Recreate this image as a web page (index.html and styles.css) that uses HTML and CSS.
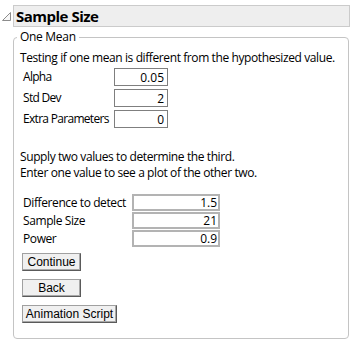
FILE: index.html
```html
<!DOCTYPE html>
<html lang="en">
<head>
    <meta charset="UTF-8">
    <meta name="viewport" content="width=device-width, initial-scale=1.0">
    <title>Sample Size</title>
    <link rel="stylesheet" href="styles.css">
</head>
<body>
    <div class="outline-head">
        <svg class="disclosure" width="9" height="9" viewBox="0 0 9 9">
            <path d="M8.5 0.5 L8.5 8.5 L0.5 8.5 Z" fill="#f7f7f7" stroke="#8c8c8c" stroke-width="1"/>
        </svg>
        <div class="outline-title">Sample Size</div>
    </div>

    <fieldset class="group">
        <legend>One Mean</legend>
        <p class="note">Testing if one mean is different from the hypothesized value.</p>

        <div class="params">
            <label for="alpha">Alpha</label>
            <input id="alpha" class="num" type="text" value="0.05">
            <label for="stddev">Std Dev</label>
            <input id="stddev" class="num" type="text" value="2">
            <label for="extra">Extra Parameters</label>
            <input id="extra" class="num" type="text" value="0">
        </div>

        <p class="note hint">Supply two values to determine the third.<br>Enter one value to see a plot of the other two.</p>

        <div class="solve">
            <label for="diff">Difference to detect</label>
            <input id="diff" class="num wide" type="text" value="1.5">
            <label for="size">Sample Size</label>
            <input id="size" class="num wide" type="text" value="21">
            <label for="power">Power</label>
            <input id="power" class="num wide" type="text" value="0.9">
        </div>

        <div class="actions">
            <button class="btn">Continue</button>
            <button class="btn">Back</button>
            <button class="btn long">Animation Script</button>
        </div>
    </fieldset>
</body>
</html>
```

FILE: styles.css
```css
body {
    margin: 0;
    background-color: #fff;
    font-family: "Open Sans", "Noto Sans", sans-serif;
    font-size: 12px;
    color: #000;
}

.outline-head {
    display: flex;
    align-items: center;
    padding-top: 5px;
    margin-left: 2px;
    margin-right: 2px;
}

.disclosure {
    flex: none;
    margin-right: 2px;
}

.outline-title {
    flex: 1;
    box-sizing: border-box;
    height: 22px;
    line-height: 20px;
    padding-left: 2px;
    background-color: #eeeeee;
    border: 1px solid #cbcbcb;
    font-weight: bold;
    font-size: 15px;
    letter-spacing: -0.5px;
}

.group {
    margin: 2px 3px 0 13px;
    padding: 0 6px 0 6px;
    height: 310px;
    box-sizing: border-box;
    border: 1px solid #c4c4c4;
    border-radius: 4px;
}

.group legend {
    padding: 0 3px;
    margin-left: -3px;
    line-height: 16px;
    letter-spacing: -0.3px;
}

.note {
    margin: 5px 0 0 0;
    line-height: 16px;
    letter-spacing: -0.4px;
}

.hint {
    margin-top: 21px;
}

.params,
.solve {
    display: grid;
    align-items: center;
    padding-left: 3px;
}

.params {
    grid-template-columns: 91px 54px;
    grid-auto-rows: 18px;
    row-gap: 3px;
    margin-top: 2px;
}

.solve {
    grid-template-columns: 109px 88px;
    grid-auto-rows: 17px;
    row-gap: 1px;
    margin-top: 13px;
}

.params label,
.solve label {
    line-height: 16px;
    letter-spacing: -0.4px;
}

.params label {
    letter-spacing: -0.7px;
}

.num {
    box-sizing: border-box;
    width: 54px;
    height: 18px;
    margin: 0;
    padding: 0 3px;
    border: 1px solid #7f7f7f;
    background-color: #fff;
    font-family: "Open Sans", "Noto Sans", sans-serif;
    font-size: 12px;
    text-align: right;
    color: #000;
}

.num.wide {
    width: 88px;
    height: 17px;
    border: 2px solid #b3b3b3;
    padding: 0 1px;
}

.actions {
    display: flex;
    flex-direction: column;
    align-items: flex-start;
    gap: 8px;
    margin-top: 6px;
    padding-left: 2px;
}

.btn {
    box-sizing: border-box;
    width: 59px;
    height: 18px;
    padding: 0;
    border: 1px solid #a0a0a0;
    border-right-color: #5a5a5a;
    border-bottom-color: #5a5a5a;
    box-shadow: inset -1px -1px 0 #a8a8a8;
    background-color: #f0f0f0;
    font-family: "Liberation Sans", Arial, sans-serif;
    font-size: 12px;
    line-height: 16px;
    color: #000;
}

.btn.long {
    width: 95px;
}
```
